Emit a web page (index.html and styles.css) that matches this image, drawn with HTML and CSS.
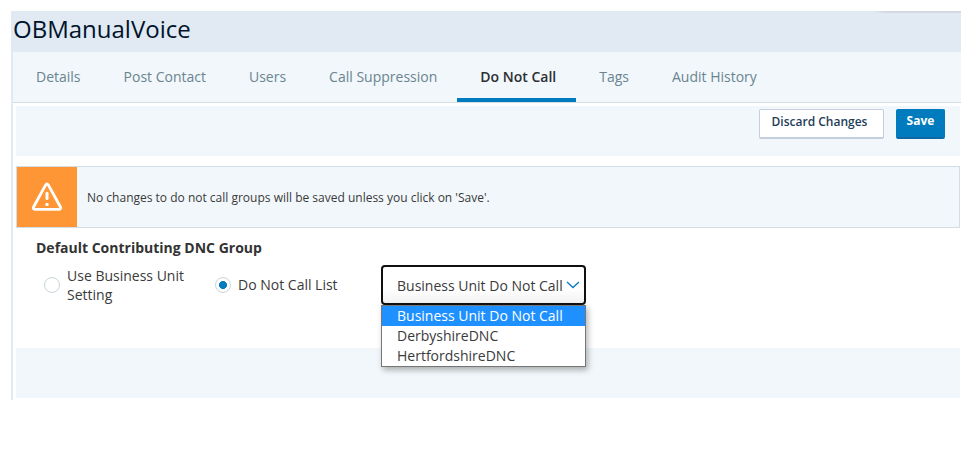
FILE: index.html
```html
<!DOCTYPE html>
<html lang="en">
<head>
  <meta charset="UTF-8">
  <title>OBManualVoice</title>
  <link rel="stylesheet" href="styles.css">
</head>
<body>

  <div class="page">
    <header class="page-header">
      <h1>OBManualVoice</h1>
    </header>

    <div class="page-body">
      <nav class="tabs">
        <a class="tab">Details</a>
        <a class="tab">Post Contact</a>
        <a class="tab">Users</a>
        <a class="tab">Call Suppression</a>
        <a class="tab active">Do Not Call</a>
        <a class="tab">Tags</a>
        <a class="tab">Audit History</a>
      </nav>

      <div class="toolbar">
        <button class="btn" type="button">Discard Changes</button>
        <button class="btn btn-primary" type="button">Save</button>
      </div>

      <div class="alert">
        <div class="alert-icon">
          <svg width="32" height="32" viewBox="0 0 32 32" fill="none" stroke="#fff" stroke-linecap="round" stroke-linejoin="round">
            <path d="M14.7 3.9 L2.4 26.2 Q1.8 28.2 3.8 28.3 H28.2 Q30.2 28.2 29.6 26.2 L17.3 3.9 Q16 1.9 14.7 3.9 Z" stroke-width="2.8"/>
            <path d="M16 12.2 V17.6" stroke-width="3"/>
            <circle cx="16" cy="23.4" r="1.7" fill="#fff" stroke="none"/>
          </svg>
        </div>
        <p>No changes to do not call groups will be saved unless you click on 'Save'.</p>
      </div>

      <div class="dnc">
        <h2>Default Contributing DNC Group</h2>
        <div class="dnc-row">
          <label class="radio radio-unit">
            <span class="dot"></span>
            <span>Use Business Unit Setting</span>
          </label>
          <label class="radio radio-list">
            <span class="dot checked"></span>
            <span class="one-line">Do Not Call List</span>
          </label>
          <div class="select">
            <div class="select-box">
              <span>Business Unit Do Not Call</span>
              <svg width="14" height="10" viewBox="0 0 14 10" fill="none" stroke="#007cbe" stroke-width="1.3">
                <path d="M1 2 L7 7.6 L13 2"/>
              </svg>
            </div>
            <ul class="select-menu">
              <li class="selected">Business Unit Do Not Call</li>
              <li>DerbyshireDNC</li>
              <li>HertfordshireDNC</li>
            </ul>
          </div>
        </div>
      </div>

      <div class="footer-bar"></div>
    </div>
  </div>

</body>
</html>
```
FILE: styles.css
```css
*{box-sizing: border-box;}
body{
  margin: 0;
  padding: 11px 6px 0 11px;
  background-color: #fff;
  color: #3a3a3a;
  font-family: "Open Sans", sans-serif;
  font-size: 14px;
}
h1, h2, p, ul{margin: 0; padding: 0;}

/* header */
.page-header{
  display: flex;
  justify-content: space-between;
  height: 41px;
  padding-left: 2px;
  background-color: #e1e9f3;
}
.page-header h1{
  color: #00142b;
  font-size: 24px;
  font-weight: 400;
  line-height: 36px;
}
/* shadow of the top menu */
.page-header:after{
  content: '';
  width: 88px;
  height: 2px;
  background: linear-gradient(to right, #e1e9f3, #d3dae3 12px);
}
.page-body{
  height: 348px;
  border-left: 2px solid #e1e9f6;
}

/* tabs */
.tabs{
  display: flex;
  height: 51px;
  background-color: #f1f7fa;
  border-bottom: 1px solid #d3dee6;
}
.tab{
  padding: 0 20px 0 23px;
  border-bottom: 4px solid transparent;
  color: #6b8490;
  line-height: 50px;
  white-space: nowrap;
}
.tab.active{
  color: #2b2e33;
  font-weight: 600;
  border-bottom-color: #007cbe;
}

/* save / discard */
.toolbar{
  display: flex;
  justify-content: flex-end;
  gap: 12px;
  height: 50px;
  margin: 3px 1px 0 3px;
  padding: 3px 15px 0 0;
  background-color: #f1f7fa;
}
.btn{
  width: 125px;
  height: 30px;
  padding: 0 4px 4px 0;
  background-color: #fff;
  border: 1px solid #c3cede;
  border-bottom-width: 2px;
  border-radius: 2px;
  color: #1d3e58;
  font-family: inherit;
  font-size: 12px;
  font-weight: 600;
}
.btn-primary{
  width: 49px;
  padding: 0 0 6px;
  background-color: #007cbe;
  border-color: #007cbe;
  border-bottom-color: #0f67a4;
  color: #fff;
  font-weight: 700;
}

/* warning message */
.alert{
  display: flex;
  align-items: center;
  height: 62px;
  margin: 10px 1px 0 3px;
  background-color: #f1f7fa;
  border: 1px solid #d2dde6;
}
.alert-icon{
  display: flex;
  align-items: center;
  justify-content: center;
  width: 60px;
  height: 60px;
  background-color: #ff9636;
}
.alert p{
  padding-left: 10px;
  font-size: 12px;
}

/* dnc group */
.dnc{
  height: 120px;
  padding: 10px 0 0 23px;
}
.dnc h2{
  color: #333;
  font-size: 14px;
  font-weight: 700;
  line-height: 19px;
}
.dnc-row{
  display: flex;
  padding: 8px 0 0 8px;
}
.radio{
  display: flex;
  align-items: center;
  gap: 7px;
  height: 40px;
  line-height: 19px;
}
.radio-unit{width: 171px; padding-right: 20px;}
.radio-list{width: 166px;}
.one-line{padding-bottom: 2px;}
.dot{
  flex: none;
  width: 16px;
  height: 16px;
  border: 1px solid #c8d5dc;
  border-radius: 50%;
  background-color: #fff;
}
.dot.checked{background: radial-gradient(circle, #007cbe 3.7px, #fff 4.3px);}

.select{
  position: relative;
  width: 205px;
}
.select-box{
  display: flex;
  align-items: center;
  justify-content: space-between;
  height: 40px;
  padding: 0 4px 0 14px;
  border: 2px solid #101010;
  border-radius: 4px;
  background: linear-gradient(#fff 60%, #f2f2f2);
  white-space: nowrap;
}
/* option list lies over the footer bar */
.select-menu{
  position: absolute;
  top: 40px;
  left: 0;
  width: 205px;
  border: 1px solid #767676;
  background-color: #fff;
  box-shadow: 2px 3px 6px rgba(0, 0, 0, .3);
  list-style-type: none;
}
.select-menu li{
  height: 20px;
  padding-left: 15px;
  line-height: 20px;
}
.select-menu .selected{
  background-color: #1e90ff;
  color: #fff;
}

.footer-bar{
  height: 50px;
  margin: 0 1px 0 3px;
  background-color: #f1f7fa;
}
```
